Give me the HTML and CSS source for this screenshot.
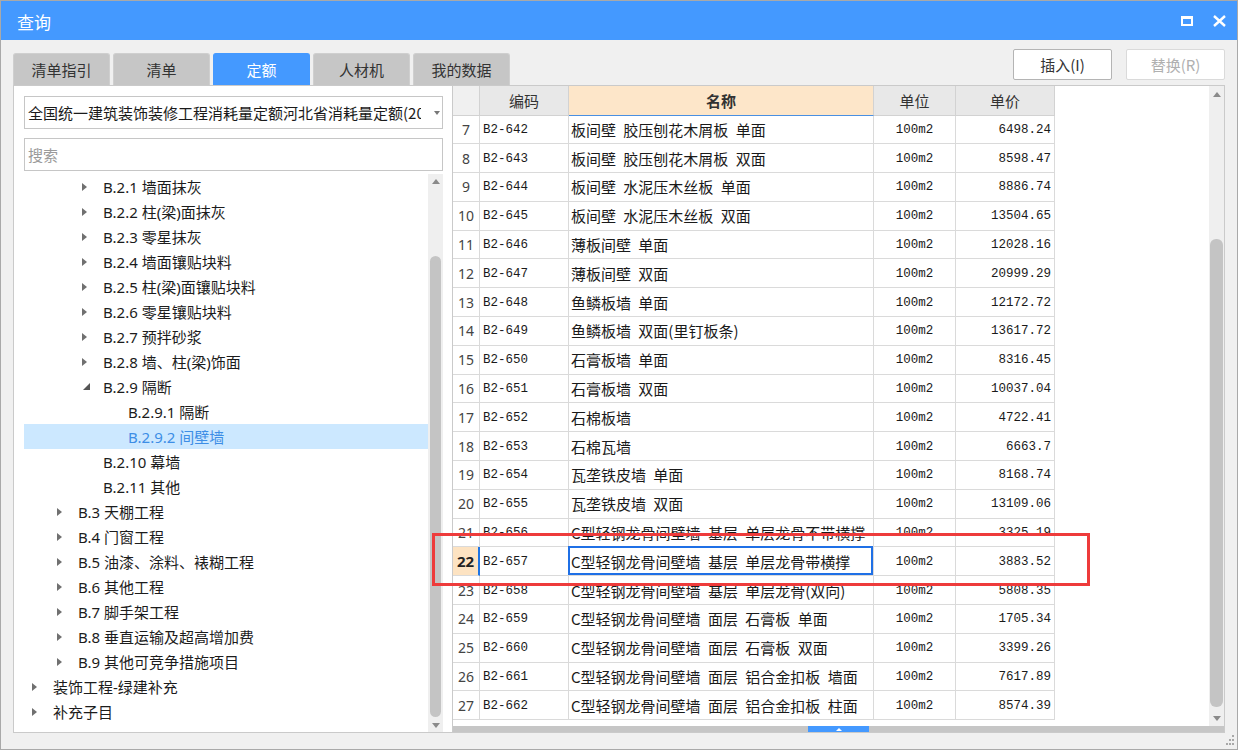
FILE: index.html
```html
<!DOCTYPE html>
<html lang="zh-CN">
<head>
<meta charset="utf-8">
<title>查询</title>
<link rel="stylesheet" href="styles.css">
</head>
<body>
<div class="window">
  <div class="titlebar">
    <span class="title">查询</span>
    <div class="ctrls">
      <svg class="ic-max" width="12" height="10" viewBox="0 0 12 10"><rect x="1" y="1" width="10" height="8" fill="none" stroke="#fff" stroke-width="2"/><rect x="0" y="0" width="12" height="3" fill="#fff"/></svg>
      <svg class="ic-close" width="13" height="12" viewBox="0 0 13 12"><path d="M1 1 L12 11 M12 1 L1 11" stroke="#fff" stroke-width="2.4" fill="none"/></svg>
    </div>
  </div>
  <div class="body">
    <div class="toprow">
      <div class="tabs">
        <div class="tab">清单指引</div>
        <div class="tab">清单</div>
        <div class="tab active">定额</div>
        <div class="tab">人材机</div>
        <div class="tab">我的数据</div>
      </div>
      <div class="buttons">
        <div class="btn">插入(I)</div>
        <div class="btn disabled">替换(R)</div>
      </div>
    </div>
    <div class="panels">
      <div class="left">
        <div class="combo"><span class="combo-text">全国统一建筑装饰装修工程消耗量定额河北省消耗量定额(2012)</span><span class="combo-arrow"></span></div>
        <div class="search">搜索</div>
        <div class="tree">
          <div class="nodes">
            <div class="node l3"><span class="tw"><i class="ar"></i></span><span>B.2.1 墙面抹灰</span></div>
            <div class="node l3"><span class="tw"><i class="ar"></i></span><span>B.2.2 柱(梁)面抹灰</span></div>
            <div class="node l3"><span class="tw"><i class="ar"></i></span><span>B.2.3 零星抹灰</span></div>
            <div class="node l3"><span class="tw"><i class="ar"></i></span><span>B.2.4 墙面镶贴块料</span></div>
            <div class="node l3"><span class="tw"><i class="ar"></i></span><span>B.2.5 柱(梁)面镶贴块料</span></div>
            <div class="node l3"><span class="tw"><i class="ar"></i></span><span>B.2.6 零星镶贴块料</span></div>
            <div class="node l3"><span class="tw"><i class="ar"></i></span><span>B.2.7 预拌砂浆</span></div>
            <div class="node l3"><span class="tw"><i class="ar"></i></span><span>B.2.8 墙、柱(梁)饰面</span></div>
            <div class="node l3"><span class="tw"><i class="ar open"></i></span><span>B.2.9 隔断</span></div>
            <div class="node l4"><span class="tw"></span><span>B.2.9.1 隔断</span></div>
            <div class="node l4 sel"><span class="tw"></span><span>B.2.9.2 间壁墙</span></div>
            <div class="node l3"><span class="tw"></span><span>B.2.10 幕墙</span></div>
            <div class="node l3"><span class="tw"></span><span>B.2.11 其他</span></div>
            <div class="node l2"><span class="tw"><i class="ar"></i></span><span>B.3 天棚工程</span></div>
            <div class="node l2"><span class="tw"><i class="ar"></i></span><span>B.4 门窗工程</span></div>
            <div class="node l2"><span class="tw"><i class="ar"></i></span><span>B.5 油漆、涂料、裱糊工程</span></div>
            <div class="node l2"><span class="tw"><i class="ar"></i></span><span>B.6 其他工程</span></div>
            <div class="node l2"><span class="tw"><i class="ar"></i></span><span>B.7 脚手架工程</span></div>
            <div class="node l2"><span class="tw"><i class="ar"></i></span><span>B.8 垂直运输及超高增加费</span></div>
            <div class="node l2"><span class="tw"><i class="ar"></i></span><span>B.9 其他可竞争措施项目</span></div>
            <div class="node l1"><span class="tw"><i class="ar"></i></span><span>装饰工程-绿建补充</span></div>
            <div class="node l1"><span class="tw"><i class="ar"></i></span><span>补充子目</span></div>
          </div>
          <div class="vscroll vs-tree">
            <div class="sb-btn"><i class="tri-up"></i></div>
            <div class="sb-track"><div class="thumb"></div></div>
            <div class="sb-btn"><i class="tri-down"></i></div>
          </div>
        </div>
      </div>
      <div class="right">
        <div class="grid-wrap">
          <div class="grid-area">
            <div class="grid">
              <div class="c hd corner"></div>
              <div class="c hd">编码</div>
              <div class="c hd hd-sel">名称</div>
              <div class="c hd">单位</div>
              <div class="c hd">单价</div>

              <div class="c rn">7</div><div class="c code">B2-642</div><div class="c name">板间壁 胶压刨花木屑板 单面</div><div class="c unit">100m2</div><div class="c price">6498.24</div>
              <div class="c rn">8</div><div class="c code">B2-643</div><div class="c name">板间壁 胶压刨花木屑板 双面</div><div class="c unit">100m2</div><div class="c price">8598.47</div>
              <div class="c rn">9</div><div class="c code">B2-644</div><div class="c name">板间壁 水泥压木丝板 单面</div><div class="c unit">100m2</div><div class="c price">8886.74</div>
              <div class="c rn">10</div><div class="c code">B2-645</div><div class="c name">板间壁 水泥压木丝板 双面</div><div class="c unit">100m2</div><div class="c price">13504.65</div>
              <div class="c rn">11</div><div class="c code">B2-646</div><div class="c name">薄板间壁 单面</div><div class="c unit">100m2</div><div class="c price">12028.16</div>
              <div class="c rn">12</div><div class="c code">B2-647</div><div class="c name">薄板间壁 双面</div><div class="c unit">100m2</div><div class="c price">20999.29</div>
              <div class="c rn">13</div><div class="c code">B2-648</div><div class="c name">鱼鳞板墙 单面</div><div class="c unit">100m2</div><div class="c price">12172.72</div>
              <div class="c rn">14</div><div class="c code">B2-649</div><div class="c name">鱼鳞板墙 双面(里钉板条)</div><div class="c unit">100m2</div><div class="c price">13617.72</div>
              <div class="c rn">15</div><div class="c code">B2-650</div><div class="c name">石膏板墙 单面</div><div class="c unit">100m2</div><div class="c price">8316.45</div>
              <div class="c rn">16</div><div class="c code">B2-651</div><div class="c name">石膏板墙 双面</div><div class="c unit">100m2</div><div class="c price">10037.04</div>
              <div class="c rn">17</div><div class="c code">B2-652</div><div class="c name">石棉板墙</div><div class="c unit">100m2</div><div class="c price">4722.41</div>
              <div class="c rn">18</div><div class="c code">B2-653</div><div class="c name">石棉瓦墙</div><div class="c unit">100m2</div><div class="c price">6663.7</div>
              <div class="c rn">19</div><div class="c code">B2-654</div><div class="c name">瓦垄铁皮墙 单面</div><div class="c unit">100m2</div><div class="c price">8168.74</div>
              <div class="c rn">20</div><div class="c code">B2-655</div><div class="c name">瓦垄铁皮墙 双面</div><div class="c unit">100m2</div><div class="c price">13109.06</div>
              <div class="c rn">21</div><div class="c code">B2-656</div><div class="c name">C型轻钢龙骨间壁墙 基层 单层龙骨不带横撑</div><div class="c unit">100m2</div><div class="c price">3325.19</div>
              <div class="c rn rn-sel">22</div><div class="c code">B2-657</div><div class="c name focus">C型轻钢龙骨间壁墙 基层 单层龙骨带横撑</div><div class="c unit">100m2</div><div class="c price">3883.52</div>
              <div class="c rn">23</div><div class="c code">B2-658</div><div class="c name">C型轻钢龙骨间壁墙 基层 单层龙骨(双向)</div><div class="c unit">100m2</div><div class="c price">5808.35</div>
              <div class="c rn">24</div><div class="c code">B2-659</div><div class="c name">C型轻钢龙骨间壁墙 面层 石膏板 单面</div><div class="c unit">100m2</div><div class="c price">1705.34</div>
              <div class="c rn">25</div><div class="c code">B2-660</div><div class="c name">C型轻钢龙骨间壁墙 面层 石膏板 双面</div><div class="c unit">100m2</div><div class="c price">3399.26</div>
              <div class="c rn">26</div><div class="c code">B2-661</div><div class="c name">C型轻钢龙骨间壁墙 面层 铝合金扣板 墙面</div><div class="c unit">100m2</div><div class="c price">7617.89</div>
              <div class="c rn">27</div><div class="c code">B2-662</div><div class="c name">C型轻钢龙骨间壁墙 面层 铝合金扣板 柱面</div><div class="c unit">100m2</div><div class="c price">8574.39</div>
            </div>
          </div>
          <div class="vscroll vs-grid">
            <div class="sb-btn"><i class="tri-up"></i></div>
            <div class="sb-track"><div class="thumb"></div></div>
            <div class="sb-btn"><i class="tri-down"></i></div>
          </div>
        </div>
        <div class="hscroll"><div class="hhandle"><i class="tri-up-w"></i></div></div>
      </div>
    </div>
    <div class="status">
      <svg class="grip" width="11" height="11" viewBox="0 0 11 11"><rect x="8" y="0" width="2" height="2" fill="#a8a8a8"/><rect x="5" y="4" width="2" height="2" fill="#a8a8a8"/><rect x="8" y="4" width="2" height="2" fill="#a8a8a8"/><rect x="2" y="8" width="2" height="2" fill="#a8a8a8"/><rect x="5" y="8" width="2" height="2" fill="#a8a8a8"/><rect x="8" y="8" width="2" height="2" fill="#a8a8a8"/></svg>
    </div>
  </div>
  <div class="highlight"></div>
</div>
</body>
</html>
```

FILE: styles.css
```css
html, body {
  margin: 0;
  padding: 0;
}
body {
  width: 1238px;
  height: 750px;
  overflow: hidden;
  font-family: "Noto Sans", "Noto Sans CJK SC", sans-serif;
  color: #222;
}
.window {
  position: relative;
  width: 1238px;
  height: 750px;
  box-sizing: border-box;
  border: 1px solid #a9a9a9;
  background: #f0f0f0;
  display: flex;
  flex-direction: column;
}
.titlebar {
  height: 39px;
  flex: none;
  background: #4499ff;
  display: flex;
  align-items: center;
  padding: 0 11px 0 16px;
  color: #fff;
}
.title {
  font-family: "Noto Sans CJK SC", sans-serif;
  font-size: 17px;
  line-height: 20px;
  margin-top: 2px;
}
.ctrls {
  margin-left: auto;
  display: flex;
  align-items: center;
  gap: 20px;
}
.ctrls svg { display: block; }

.body {
  flex: 1;
  display: flex;
  flex-direction: column;
  padding: 9px 12px 0 12px;
  min-height: 0;
}
.toprow {
  height: 36px;
  flex: none;
  display: flex;
}
.tabs {
  align-self: flex-end;
  display: flex;
  gap: 3px;
}
.tab {
  width: 97px;
  height: 32px;
  box-sizing: border-box;
  background: #c6c6c6;
  border: 1px solid #cfcfcf;
  border-bottom: none;
  border-radius: 3px 3px 0 0;
  font-family: "Noto Sans CJK SC", sans-serif;
  font-size: 15px;
  line-height: 31px;
  text-align: center;
  color: #333;
}
.tab.active {
  background: #4499ff;
  border-color: #4499ff;
  color: #fff;
}
.buttons {
  margin-left: auto;
  display: flex;
  gap: 14px;
  align-self: flex-start;
}
.btn {
  width: 99px;
  height: 31px;
  box-sizing: border-box;
  background: #fff;
  border: 1px solid #b4b4b4;
  border-radius: 2px;
  font-family: "Noto Sans CJK SC", sans-serif;
  font-size: 15px;
  line-height: 29px;
  text-align: center;
  color: #333;
}
.btn.disabled {
  border-color: #dadada;
  color: #b0b0b0;
}

.panels {
  height: 648px;
  flex: none;
  display: flex;
}
.left {
  width: 440px;
  flex: none;
  box-sizing: border-box;
  background: #fff;
  border: 1px solid #cacaca;
  padding: 10px 9px 0 10px;
  display: flex;
  flex-direction: column;
}
.combo {
  height: 33px;
  flex: none;
  box-sizing: border-box;
  border: 1px solid #c6c6c6;
  display: flex;
  align-items: center;
  padding-left: 3px;
  font-family: "Noto Sans CJK SC", sans-serif;
  font-size: 15px;
}
.combo-text {
  width: 393px;
  overflow: hidden;
  white-space: nowrap;
  color: #1a1a1a;
}
.combo-arrow {
  margin-left: 13px;
  width: 0;
  height: 0;
  border-left: 3.5px solid transparent;
  border-right: 3.5px solid transparent;
  border-top: 4px solid #777;
}
.search {
  height: 33px;
  flex: none;
  margin-top: 9px;
  box-sizing: border-box;
  border: 1px solid #c6c6c6;
  padding-left: 3px;
  font-family: "Noto Sans CJK SC", sans-serif;
  font-size: 15px;
  line-height: 31px;
  color: #9a9a9a;
}
.tree {
  flex: 1;
  margin-top: 3px;
  display: flex;
  min-height: 0;
}
.nodes {
  flex: 1;
  overflow: hidden;
}
.node {
  height: 25px;
  display: flex;
  align-items: center;
  white-space: nowrap;
  font-size: 15px;
  color: #1c1c1c;
}
.node.l1 { padding-left: 8px; }
.node.l2 { padding-left: 33px; }
.node.l3 { padding-left: 58px; }
.node.l4 { padding-left: 83px; }
.node.sel {
  background: #cce8ff;
  color: #3d8ee6;
}
.tw {
  width: 21px;
  flex: none;
  display: flex;
  align-items: center;
}
.ar {
  display: block;
  width: 0;
  height: 0;
  border-top: 4px solid transparent;
  border-bottom: 4px solid transparent;
  border-left: 5px solid #707070;
}
.ar.open {
  margin-left: 1px;
  border-top: none;
  border-left: 7px solid transparent;
  border-bottom: 7px solid #555;
}

.vscroll {
  width: 15px;
  flex: none;
  background: #efefef;
  display: flex;
  flex-direction: column;
  align-items: center;
}
.sb-btn {
  height: 14px;
  flex: none;
  display: flex;
  align-items: center;
  justify-content: center;
}
.sb-track {
  flex: 1;
  width: 100%;
  display: flex;
  flex-direction: column;
  align-items: center;
}
.thumb {
  width: 11px;
  background: #c4c4c4;
  border-radius: 6px;
}
.vs-tree .thumb {
  margin-top: 68px;
  height: 461px;
}
.vs-grid .sb-btn { height: 16px; }
.vs-grid .thumb {
  margin-top: 137px;
  height: 468px;
  width: 13px;
}
.tri-up {
  display: block;
  width: 0;
  height: 0;
  border-left: 4.5px solid transparent;
  border-right: 4.5px solid transparent;
  border-bottom: 5px solid #8a8a8a;
}
.tri-down {
  display: block;
  width: 0;
  height: 0;
  border-left: 4.5px solid transparent;
  border-right: 4.5px solid transparent;
  border-top: 5px solid #8a8a8a;
}

.right {
  flex: 1;
  box-sizing: border-box;
  border: 1px solid #cacaca;
  border-left: none;
  background: #fff;
  display: flex;
  flex-direction: column;
  min-width: 0;
}
.grid-wrap {
  flex: 1;
  display: flex;
  min-height: 0;
}
.grid-area {
  flex: 1;
  overflow: hidden;
  background: #fff;
}
.grid {
  display: grid;
  grid-template-columns: 27px 89px 305px 82px 99px;
  grid-template-rows: 29.5px;
  grid-auto-rows: 28.8px;
  width: 602px;
}
.c {
  box-sizing: border-box;
  border-right: 1px solid #dadada;
  border-bottom: 1px solid #dadada;
  white-space: nowrap;
  overflow: hidden;
  display: flex;
  align-items: center;
}
.hd {
  background: #e8e8e8;
  border-color: #d2d2d2;
  justify-content: center;
  font-family: "Noto Sans CJK SC", sans-serif;
  font-size: 15px;
  color: #333;
}
.hd.corner { background: #f0f0f0; }
.hd.hd-sel {
  background: #fde6c9;
  font-weight: bold;
  border-bottom-color: #4a90e2;
}
.rn {
  justify-content: center;
  font-size: 14px;
  color: #444;
}
.rn.rn-sel {
  background: #fde3c2;
  font-weight: bold;
  font-size: 15px;
  color: #222;
  border-right: 2px solid #1e74e4;
}
.code {
  padding-left: 3px;
  padding-top: 1px;
  font-family: "Liberation Mono", monospace;
  font-size: 12.5px;
  color: #1a1a1a;
}
.name {
  padding-left: 2px;
  font-family: "Noto Sans CJK SC", sans-serif;
  font-size: 15px;
  word-spacing: 4px;
  color: #1a1a1a;
}
.name.focus {
  position: relative;
  overflow: visible;
}
.name.focus::after {
  content: "";
  position: absolute;
  top: -1px;
  left: -1px;
  right: 0;
  bottom: 0;
  border: 2px solid #1f70e6;
}
.unit {
  justify-content: center;
  padding-top: 1px;
  font-family: "Liberation Mono", monospace;
  font-size: 12.5px;
  color: #1a1a1a;
}
.price {
  justify-content: flex-end;
  padding-right: 3px;
  padding-top: 1px;
  font-family: "Liberation Mono", monospace;
  font-size: 12.5px;
  color: #1a1a1a;
}
.hscroll {
  height: 6px;
  flex: none;
  background: #c6c6c6;
  display: flex;
}
.hhandle {
  margin-left: 355px;
  width: 61px;
  background: #4499ff;
  display: flex;
  align-items: center;
  justify-content: center;
}
.tri-up-w {
  display: block;
  width: 0;
  height: 0;
  border-left: 3px solid transparent;
  border-right: 3px solid transparent;
  border-bottom: 3px solid #fff;
}
.status {
  flex: 1;
  display: flex;
  justify-content: flex-end;
  align-items: flex-end;
  margin-right: -10px;
  padding-bottom: 3px;
}
.grip { display: block; }

.highlight {
  position: absolute;
  left: 431px;
  top: 532px;
  width: 658px;
  height: 53px;
  box-sizing: border-box;
  border: 3px solid #ee3b3b;
  pointer-events: none;
}
```
